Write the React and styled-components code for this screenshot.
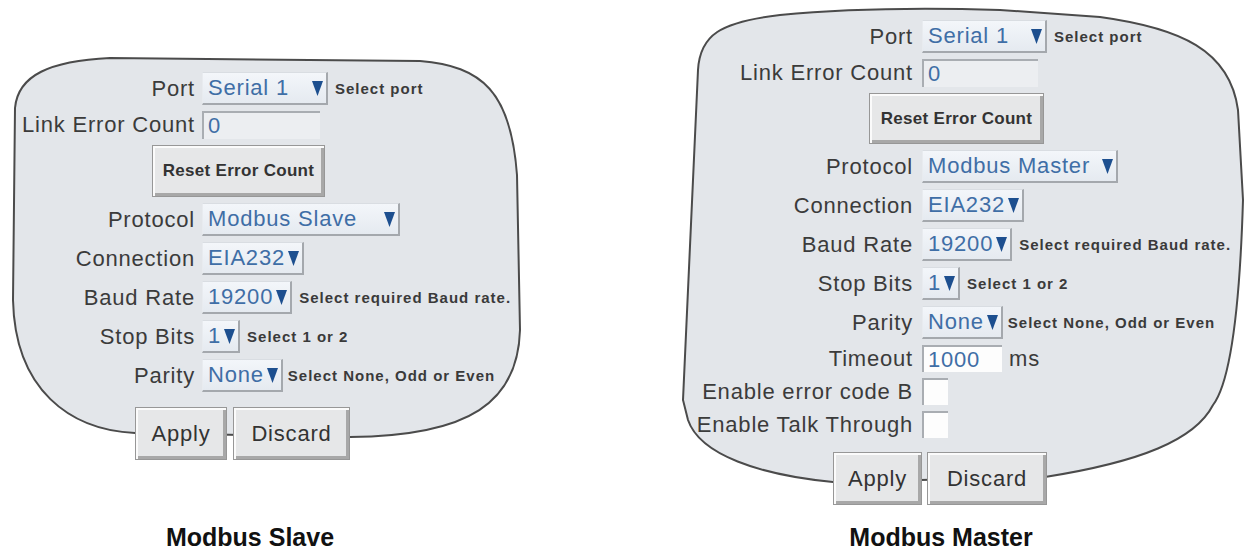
import React from 'react';
import styled, { createGlobalStyle } from 'styled-components';

const Global = createGlobalStyle`
  body {
    margin: 0;
    background: #fff;
  }
`;

const Page = styled.div`
  display: flex;
  width: 1245px;
  height: 550px;
  overflow: hidden;
  background: #fff;
  font-family: "Liberation Sans", Arial, sans-serif;
`;

const Figure = styled.div`
  display: flex;
  flex-direction: column;
  width: ${(p) => p.$w}px;
  height: 550px;
`;

const Panel = styled.div`
  position: relative;
  flex: 1;
  box-sizing: border-box;
  padding-top: ${(p) => p.$top}px;
`;

const Outline = styled.svg`
  position: absolute;
  left: 0;
  top: 0;
  width: 100%;
  height: 100%;
  overflow: visible;
  z-index: 0;
`;

const Form = styled.div`
  position: relative;
  z-index: 1;
  display: grid;
  grid-template-columns: ${(p) => p.$label}px auto;
  column-gap: ${(p) => p.$gap}px;
  row-gap: 6px;
  align-items: center;
  justify-content: start;
`;

const Label = styled.div`
  text-align: right;
  white-space: nowrap;
  font-size: 22px;
  letter-spacing: 0.8px;
  color: #3b3b3b;
`;

const Control = styled.div`
  display: flex;
  align-items: center;
  gap: ${(p) => p.$gap ?? 7}px;
  grid-column: 2;
`;

const Select = styled.div`
  display: flex;
  align-items: center;
  justify-content: space-between;
  gap: 3px;
  box-sizing: border-box;
  width: ${(p) => (p.$w ? `${p.$w}px` : 'auto')};
  height: 33px;
  padding: 0 3px 0 5px;
  background: linear-gradient(#f3f6fa, #e5eaf0);
  border-top: 1px solid #d9dde2;
  border-left: 1px solid #e8ebef;
  border-right: 2px solid #a4a8ad;
  border-bottom: 2px solid #a4a8ad;
  color: #3f6ea6;
  font-size: 22px;
  letter-spacing: 0.8px;
  white-space: nowrap;
`;

const Field = styled.div`
  display: flex;
  align-items: center;
  box-sizing: border-box;
  width: ${(p) => p.$w}px;
  height: ${(p) => p.$h ?? 28}px;
  padding-left: 4px;
  background: ${(p) => (p.$white ? '#fdfdfd' : '#eceef1')};
  border-top: 2px solid #a9adb2;
  border-left: 2px solid #a9adb2;
  color: #3f6ea6;
  font-size: 22px;
  letter-spacing: 0.8px;
`;

const Check = styled.div`
  box-sizing: border-box;
  width: 26px;
  height: 27px;
  background: #fdfdfd;
  border-top: 2px solid #a9adb2;
  border-left: 2px solid #a9adb2;
`;

const Hint = styled.span`
  font-size: 15px;
  font-weight: 700;
  letter-spacing: 1px;
  color: #3a3a3a;
  white-space: nowrap;
`;

const Unit = styled.span`
  font-size: 22px;
  letter-spacing: 0.8px;
  color: #3b3b3b;
`;

const Button = styled.div`
  display: flex;
  align-items: center;
  justify-content: center;
  box-sizing: border-box;
  width: ${(p) => p.$w}px;
  height: ${(p) => p.$h}px;
  margin-left: ${(p) => p.$shift ?? 0}px;
  background: #e6e7e8;
  border: 1px solid #979797;
  box-shadow: inset 2px 2px 0 #fbfbfb, inset -3px -3px 0 #a8a8a8;
  color: #333;
  font-size: ${(p) => (p.$small ? 17 : 22)}px;
  font-weight: ${(p) => (p.$small ? 700 : 400)};
  letter-spacing: ${(p) => (p.$small ? 0.3 : 0.8)}px;
  white-space: nowrap;
`;

const ButtonRow = styled.div`
  position: relative;
  z-index: 1;
  display: flex;
  gap: ${(p) => p.$gap}px;
  margin-top: ${(p) => p.$mt}px;
  margin-left: ${(p) => p.$ml}px;
`;

const Caption = styled.div`
  width: 300px;
  height: 26px;
  margin-left: ${(p) => p.$x - 150}px;
  text-align: center;
  font-size: 25px;
  line-height: 26px;
  font-weight: 700;
  color: #111;
`;

function Arrow() {
  return (
    <svg width="11" height="15" viewBox="0 0 11 15">
      <polygon points="0,0 11,0 5.5,15" fill="#1d4f8f" />
    </svg>
  );
}

function Drop({ value, w }) {
  return (
    <Select $w={w}>
      <span>{value}</span>
      <Arrow />
    </Select>
  );
}

function Row({ label, children, gap }) {
  return (
    <>
      <Label>{label}</Label>
      <Control $gap={gap}>{children}</Control>
    </>
  );
}

const slavePath =
  'M 15 108 C 18 75, 50 61, 110 58 L 420 61 C 482 66, 511 92, 517 175 L 520 330 C 518 402, 470 436, 350 437 L 135 433 C 70 430, 15 390, 13 300 Z';

const masterPath =
  'M 58 70 C 60 35, 80 22, 140 15 Q 233 6, 360 10 L 460 17 C 540 28, 590 50, 598 110 L 603 200 C 600 300, 592 380, 573 405 C 555 440, 500 462, 405 477 L 193 482 C 120 475, 60 455, 48 420 L 43 400 Z';

function Shape({ d }) {
  return (
    <Outline>
      <path d={d} fill="#e3e6ea" stroke="#4b4b4b" strokeWidth="2" />
    </Outline>
  );
}

export default function App() {
  return (
    <Page>
      <Global />
      <Figure $w={640}>
        <Panel $top={72}>
          <Shape d={slavePath} />
          <Form $label={195} $gap={7}>
            <Row label="Port">
              <Drop value="Serial 1" w={126} />
              <Hint>Select port</Hint>
            </Row>
            <Row label="Link Error Count">
              <Field $w={118}>0</Field>
            </Row>
            <Control>
              <Button $w={173} $h={52} $shift={-50} $small>
                Reset Error Count
              </Button>
            </Control>
            <Row label="Protocol">
              <Drop value="Modbus Slave" w={198} />
            </Row>
            <Row label="Connection">
              <Drop value="EIA232" />
            </Row>
            <Row label="Baud Rate">
              <Drop value="19200" />
              <Hint>Select required Baud rate.</Hint>
            </Row>
            <Row label="Stop Bits">
              <Drop value="1" />
              <Hint>Select 1 or 2</Hint>
            </Row>
            <Row label="Parity" gap={5}>
              <Drop value="None" />
              <Hint>Select None, Odd or Even</Hint>
            </Row>
          </Form>
          <ButtonRow $mt={15} $ml={135} $gap={6}>
            <Button $w={92} $h={53}>Apply</Button>
            <Button $w={117} $h={53}>Discard</Button>
          </ButtonRow>
        </Panel>
        <Caption $x={250}>Modbus Slave</Caption>
      </Figure>

      <Figure $w={605}>
        <Panel $top={20}>
          <Shape d={masterPath} />
          <Form $label={273} $gap={9}>
            <Row label="Port">
              <Drop value="Serial 1" w={125} />
              <Hint>Select port</Hint>
            </Row>
            <Row label="Link Error Count">
              <Field $w={116}>0</Field>
            </Row>
            <Control>
              <Button $w={175} $h={51} $shift={-53} $small>
                Reset Error Count
              </Button>
            </Control>
            <Row label="Protocol">
              <Drop value="Modbus Master" w={196} />
            </Row>
            <Row label="Connection">
              <Drop value="EIA232" />
            </Row>
            <Row label="Baud Rate">
              <Drop value="19200" />
              <Hint>Select required Baud rate.</Hint>
            </Row>
            <Row label="Stop Bits">
              <Drop value="1" />
              <Hint>Select 1 or 2</Hint>
            </Row>
            <Row label="Parity" gap={5}>
              <Drop value="None" />
              <Hint>Select None, Odd or Even</Hint>
            </Row>
            <Row label="Timeout">
              <Field $w={80} $h={27} $white>1000</Field>
              <Unit>ms</Unit>
            </Row>
            <Row label="Enable error code B">
              <Check />
            </Row>
            <Row label="Enable Talk Through">
              <Check />
            </Row>
          </Form>
          <ButtonRow $mt={14} $ml={193} $gap={5}>
            <Button $w={89} $h={53}>Apply</Button>
            <Button $w={120} $h={53}>Discard</Button>
          </ButtonRow>
        </Panel>
        <Caption $x={301}>Modbus Master</Caption>
      </Figure>
    </Page>
  );
}
